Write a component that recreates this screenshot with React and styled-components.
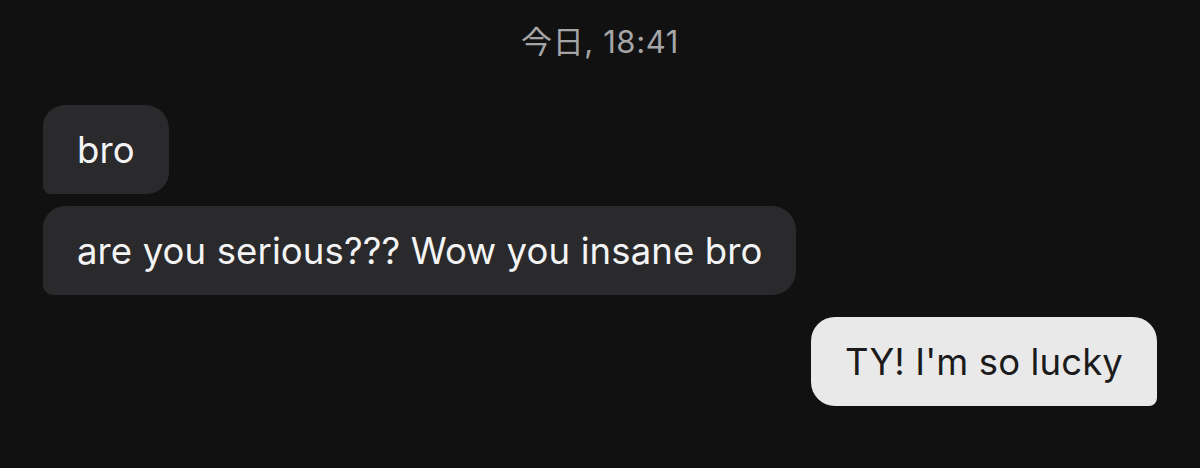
import React from 'react'
import styled, { createGlobalStyle } from 'styled-components'

const Global = createGlobalStyle`
  html, body {
    margin: 0;
    padding: 0;
    background: #121112;
  }
  body {
    font-family: Inter, "Noto Sans CJK JP", "Noto Sans", sans-serif;
  }
`

const Screen = styled.div`
  width: 1200px;
  height: 468px;
  background: #121112;
  box-sizing: border-box;
  padding: 22px 43px 0 43px;
  display: flex;
  flex-direction: column;
  overflow: hidden;
`

const Stamp = styled.div`
  text-align: center;
  color: #a5a5a7;
  font-size: 31px;
  line-height: 40px;
  letter-spacing: 0.6px;
  margin-bottom: 43px;
`

const Group = styled.div`
  display: flex;
  flex-direction: column;
  align-items: ${p => (p.$mine ? 'flex-end' : 'flex-start')};
  gap: 12px;
  margin-top: ${p => p.$gapTop || 0}px;
`

const Bubble = styled.div`
  box-sizing: border-box;
  height: 89px;
  display: flex;
  align-items: center;
  padding: 0 34px;
  font-size: 36.5px;
  letter-spacing: 0.12px;
  background: ${p => (p.$mine ? '#e9e9e9' : '#2a292b')};
  color: ${p => (p.$mine ? '#1b1b1c' : '#f4f4f5')};
  border-radius: ${p => p.$radius};
  white-space: nowrap;
`

const App = () => {
  return (
    <Screen>
      <Global />
      <Stamp>今日, 18:41</Stamp>
      <Group>
        <Bubble $radius="22px 24px 22px 8px">bro</Bubble>
        <Bubble $radius="22px 24px 24px 10px">are you serious??? Wow you insane bro</Bubble>
      </Group>
      <Group $mine $gapTop={22}>
        <Bubble $mine $radius="24px 24px 8px 24px">TY! I'm so lucky</Bubble>
      </Group>
    </Screen>
  )
}

export default App
